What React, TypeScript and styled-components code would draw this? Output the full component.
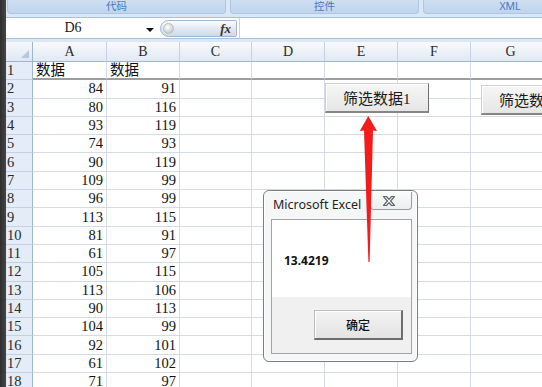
import React from "react";
import styled, { createGlobalStyle } from "styled-components";

const GlobalStyle = createGlobalStyle`
  html, body {
    margin: 0;
    padding: 0;
    background: #fff;
    overflow: hidden;
  }
  * {
    box-sizing: border-box;
  }
`;

const cellFont = `"Liberation Serif", "Noto Sans CJK SC", serif`;
const uiFont = `"Noto Sans", "Noto Sans CJK SC", sans-serif`;

const Screen = styled.div`
  position: relative;
  width: 542px;
  height: 387px;
  overflow: hidden;
  display: flex;
  background: #fff;
`;

const DarkEdge = styled.div`
  flex: none;
  width: 6px;
  background: linear-gradient(90deg, #2e2e2e, #464646);
`;

const Workspace = styled.div`
  flex: 1;
  min-width: 0;
  display: flex;
  flex-direction: column;
`;

const Ribbon = styled.div`
  flex: none;
  height: 18px;
  display: flex;
  gap: 4px;
  padding-left: 1px;
  background: #dce7f5;
  border-bottom: 1px solid #a9c0dc;
  overflow: hidden;
`;

const GroupLabel = styled.div<{ $w: number }>`
  flex: none;
  width: ${(p) => p.$w}px;
  height: 14px;
  display: flex;
  align-items: center;
  justify-content: center;
  background: linear-gradient(#cfdff2, #bfd4ed);
  border: 1px solid #aec6e3;
  border-top: none;
  border-radius: 0 0 4px 4px;
  color: #4a78bd;
  font-family: ${uiFont};
  font-size: 10.5px;
  line-height: 13px;
`;

const FormulaBar = styled.div`
  flex: none;
  height: 21px;
  display: flex;
  align-items: stretch;
  background: #fff;
  border-bottom: 1px solid #a9c0dc;
`;

const NameBox = styled.div`
  flex: none;
  width: 134px;
  display: flex;
  align-items: center;
  justify-content: center;
  font-family: ${cellFont};
  font-size: 14px;
  color: #1a1a1a;
`;

const DropCell = styled.div`
  flex: none;
  width: 20px;
  display: flex;
  align-items: center;
  justify-content: center;
  padding-top: 3px;
`;

const DropArrow = styled.span`
  width: 0;
  height: 0;
  border-left: 4px solid transparent;
  border-right: 4px solid transparent;
  border-top: 4px solid #111;
`;

const Pill = styled.div`
  flex: none;
  width: 77px;
  margin: 2px 0 1px;
  display: flex;
  align-items: center;
  justify-content: space-between;
  padding: 0 5px 0 2px;
  background: linear-gradient(#fbfcfe, #dfe7f2 55%, #cfdae9);
  border: 1px solid #9fb4cf;
  border-radius: 9px 2px 2px 9px;
`;

const Knob = styled.span`
  width: 11px;
  height: 11px;
  border-radius: 50%;
  background: radial-gradient(circle at 40% 35%, #ffffff, #c9ced6 70%, #a9b0ba);
  border: 1px solid #b7bfca;
`;

const Fx = styled.span`
  font-family: "Liberation Serif", serif;
  font-style: italic;
  font-weight: bold;
  font-size: 13px;
  color: #333;
`;

const FormulaInput = styled.div`
  flex: 1;
  margin-left: 2px;
  border-left: 1px solid #c6d3e4;
`;

const Band = styled.div`
  flex: none;
  height: 3px;
  background: #dce7f5;
`;

const Sheet = styled.div`
  display: grid;
  grid-template-columns: 27px 74px 73px 72px 73px 73px 73px 80px;
  grid-template-rows: 20px repeat(18, 18.3px);
  font-family: ${cellFont};
  font-size: 14.5px;
  color: #111;
`;

const Corner = styled.div`
  position: relative;
  background: linear-gradient(#f6f9fc, #dfe7f2);
  border-right: 1px solid #9eb6ce;
  border-bottom: 1px solid #9eb6ce;
  &::after {
    content: "";
    position: absolute;
    right: 3px;
    bottom: 3px;
    border-left: 8px solid transparent;
    border-bottom: 8px solid #b7c8dd;
  }
`;

const ColHead = styled.div`
  display: flex;
  align-items: center;
  justify-content: center;
  background: linear-gradient(#f8fafd, #e2e9f3);
  border-right: 1px solid #c5d2e3;
  border-bottom: 1px solid #9eb6ce;
  font-size: 14px;
  color: #2a2a2a;
  padding-top: 1px;
`;

const RowHead = styled.div`
  display: flex;
  align-items: center;
  padding-left: 1px;
  background: #e4ecf7;
  border-right: 1px solid #9eb6ce;
  border-bottom: 1px solid #c3d1e3;
  color: #2a2a2a;
  line-height: 17px;
`;

const Cell = styled.div<{ $num?: boolean; $frozen?: boolean }>`
  display: flex;
  align-items: center;
  justify-content: ${(p) => (p.$num ? "flex-end" : "flex-start")};
  padding: 0 3px;
  line-height: 17px;
  white-space: nowrap;
  overflow: hidden;
  border-right: 1px solid #d4dbe6;
  border-bottom: ${(p) => (p.$frozen ? "2px solid #9d9d9d" : "1px solid #d4dbe6")};
`;

const SheetButton = styled.div<{ $left: number; $top: number; $w: number }>`
  position: absolute;
  left: ${(p) => p.$left}px;
  top: ${(p) => p.$top}px;
  width: ${(p) => p.$w}px;
  height: 30px;
  display: flex;
  align-items: center;
  padding-left: 17px;
  background: linear-gradient(#f6f6f6, #e6e6e6);
  border: 1px solid #cfcfcf;
  border-right-color: #6f6f6f;
  border-bottom: 2px solid #858585;
  box-shadow: inset 1px 1px 0 #ffffff;
  font-family: ${cellFont};
  font-size: 15px;
  color: #1a1a1a;
  white-space: nowrap;
  overflow: hidden;
`;

const Dialog = styled.div`
  position: absolute;
  left: 263px;
  top: 190px;
  width: 155px;
  height: 172px;
  display: flex;
  flex-direction: column;
  padding: 0 5px 7px 7px;
  background: #f5f6f7;
  border: 1px solid #7c7c7c;
  border-radius: 6px;
  box-shadow: inset 0 0 0 1px #ffffff;
`;

const TitleBar = styled.div`
  flex: none;
  height: 28px;
  display: flex;
  justify-content: space-between;
  align-items: flex-start;
`;

const TitleText = styled.span`
  margin-top: 5px;
  padding-left: 2px;
  font-family: ${uiFont};
  font-size: 12.5px;
  color: #1e1e1e;
`;

const CloseButton = styled.div`
  width: 42px;
  height: 18px;
  margin-top: 1px;
  display: flex;
  align-items: center;
  justify-content: center;
  padding-right: 4px;
  background: linear-gradient(#fbfbfb, #eceeef);
  border: 1px solid #9a9a9a;
  border-top: none;
  border-radius: 0 0 4px 4px;
`;

const Client = styled.div`
  flex: 1;
  display: flex;
  flex-direction: column;
  border: 1px solid #a3a3a3;
  background: #fff;
`;

const Message = styled.div`
  flex: none;
  height: 77px;
  display: flex;
  align-items: center;
  padding: 4px 0 0 12px;
  font-family: ${uiFont};
  font-weight: bold;
  font-size: 12px;
  color: #111;
`;

const ButtonStrip = styled.div`
  flex: 1;
  display: flex;
  justify-content: flex-end;
  align-items: flex-start;
  padding: 13px 8px 0 0;
  background: #f0f0f0;
`;

const OkButton = styled.div`
  width: 89px;
  height: 30px;
  display: flex;
  align-items: center;
  justify-content: center;
  background: linear-gradient(#f3f3f3, #e3e3e3);
  border: 1px solid #bdbdbd;
  border-right: 2px solid #6d6d6d;
  border-bottom: 2px solid #6d6d6d;
  box-shadow: inset 1px 1px 0 #ffffff;
  font-family: "Noto Sans CJK SC", sans-serif;
  font-weight: 500;
  font-size: 12px;
  color: #111;
`;

const ArrowSvg = styled.svg`
  position: absolute;
  left: 358px;
  top: 114px;
  width: 22px;
  height: 150px;
  overflow: visible;
`;

const columns = ["A", "B", "C", "D", "E", "F", "G"];

const data: [number, number][] = [
  [84, 91],
  [80, 116],
  [93, 119],
  [74, 93],
  [90, 119],
  [109, 99],
  [96, 99],
  [113, 115],
  [81, 91],
  [61, 97],
  [105, 115],
  [113, 106],
  [90, 113],
  [104, 99],
  [92, 101],
  [61, 102],
  [71, 97],
];

const CloseGlyph = () => (
  <svg width="14" height="12" viewBox="0 0 14 12">
    <path
      d="M1.5 1.5 H4.5 L7 4.3 L9.5 1.5 H12.5 L8.6 6 L12.5 10.5 H9.5 L7 7.7 L4.5 10.5 H1.5 L5.4 6 Z"
      fill="#ffffff"
      stroke="#5f6770"
      strokeWidth="1.2"
      strokeLinejoin="round"
    />
  </svg>
);

const App = () => (
  <>
    <GlobalStyle />
    <Screen>
      <DarkEdge />
      <Workspace>
        <Ribbon>
          <GroupLabel $w={219}>代码</GroupLabel>
          <GroupLabel $w={189}>控件</GroupLabel>
          <GroupLabel $w={174}>XML</GroupLabel>
        </Ribbon>
        <FormulaBar>
          <NameBox>D6</NameBox>
          <DropCell>
            <DropArrow />
          </DropCell>
          <Pill>
            <Knob />
            <Fx>fx</Fx>
          </Pill>
          <FormulaInput />
        </FormulaBar>
        <Band />
        <Sheet>
          <Corner />
          {columns.map((c) => (
            <ColHead key={c}>{c}</ColHead>
          ))}
          <RowHead>1</RowHead>
          <Cell $frozen>数据</Cell>
          <Cell $frozen>数据</Cell>
          {columns.slice(2).map((c) => (
            <Cell key={c} $frozen />
          ))}
          {data.map(([a, b], i) => (
            <React.Fragment key={i}>
              <RowHead>{i + 2}</RowHead>
              <Cell $num>{a}</Cell>
              <Cell $num>{b}</Cell>
              {columns.slice(2).map((c) => (
                <Cell key={c} />
              ))}
            </React.Fragment>
          ))}
        </Sheet>
      </Workspace>

      <SheetButton $left={325} $top={83} $w={104}>
        筛选数据1
      </SheetButton>
      <SheetButton $left={481} $top={85} $w={110}>
        筛选数据2
      </SheetButton>

      <Dialog>
        <TitleBar>
          <TitleText>Microsoft Excel</TitleText>
          <CloseButton>
            <CloseGlyph />
          </CloseButton>
        </TitleBar>
        <Client>
          <Message>13.4219</Message>
          <ButtonStrip>
            <OkButton>确定</OkButton>
          </ButtonStrip>
        </Client>
      </Dialog>

      <ArrowSvg viewBox="0 0 22 150">
        <polygon
          points="10.3,2 19,17 15,16.5 11.6,148 10.4,148 6,16.5 1.8,17"
          fill="#f41b1b"
        />
      </ArrowSvg>
    </Screen>
  </>
);

export default App;
